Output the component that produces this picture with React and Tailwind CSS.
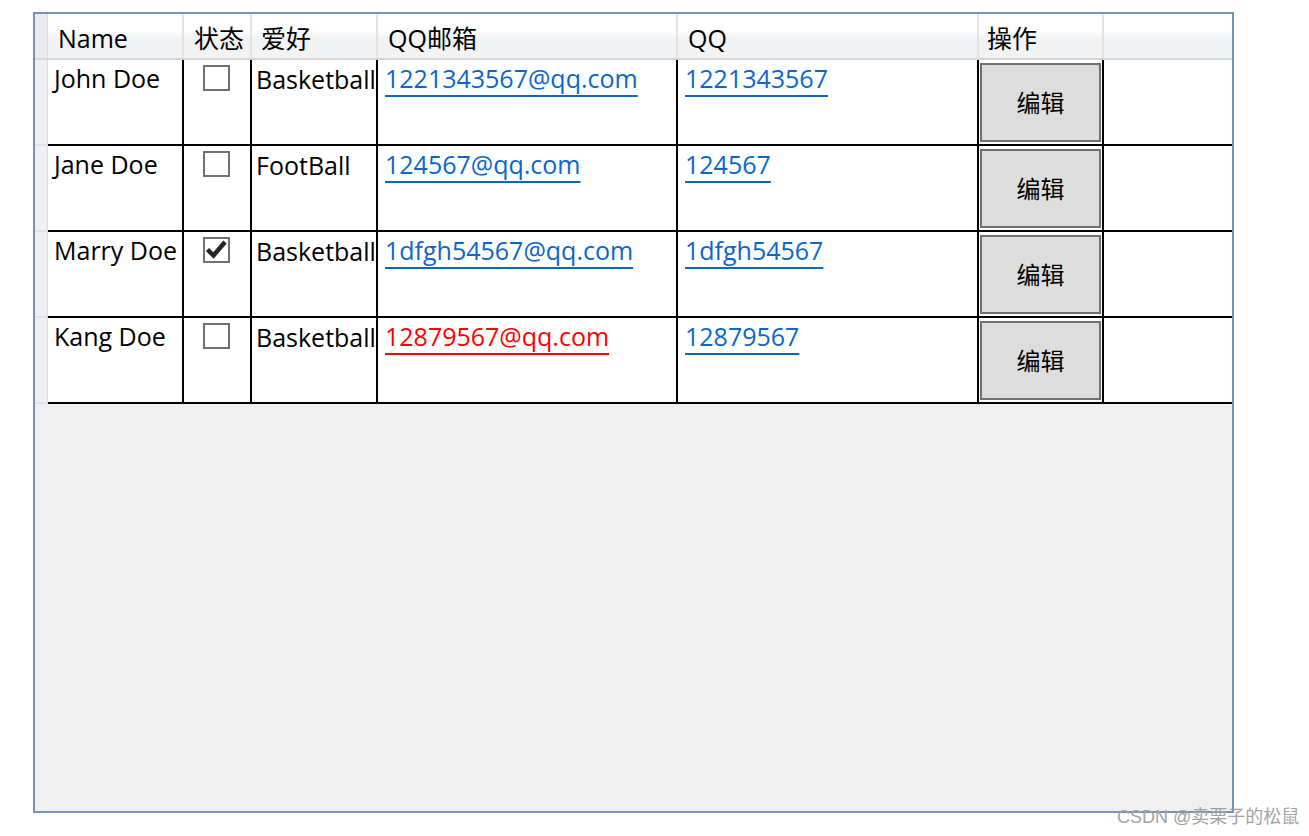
import React from "react";

const font = { fontFamily: '"Open Sans","Noto Sans CJK SC",sans-serif' };

const rows = [
  { name: "John Doe", checked: false, hobby: "Basketball", email: "1221343567@qq.com", qq: "1221343567", red: false },
  { name: "Jane Doe", checked: false, hobby: "FootBall", email: "124567@qq.com", qq: "124567", red: false },
  { name: "Marry Doe", checked: true, hobby: "Basketball", email: "1dfgh54567@qq.com", qq: "1dfgh54567", red: false },
  { name: "Kang Doe", checked: false, hobby: "Basketball", email: "12879567@qq.com", qq: "12879567", red: true },
];

function CheckBox({ checked }) {
  return (
    <div className="mx-auto mt-[5px] w-[27px] h-[26px] border-2 border-[#707070] bg-white flex items-center justify-center">
      {checked && (
        <svg width="23" height="22" viewBox="0 0 23 22">
          <path d="M2.5 10.5 L8.5 16.5 L20 3" fill="none" stroke="#262626" strokeWidth="4.5" strokeLinejoin="miter" strokeLinecap="butt" />
        </svg>
      )}
    </div>
  );
}

export default function App() {
  return (
    <div className="relative w-[1309px] h-[836px] bg-white pl-[33px] pt-[12px]" style={font}>
      <div className="w-[1201px] h-[801px] border-2 border-[#7393b8] bg-[#f0f0f0] flex flex-col">
        {/* header */}
        <div className="flex h-[46px] shrink-0 bg-[linear-gradient(#ffffff_0%,#ffffff_38%,#f2f3f5_55%,#f2f3f5_100%)] border-b-2 border-[#d6d6d6] text-[25px] leading-[44px] text-black">
          <div className="w-[13px] shrink-0 bg-[#ebebeb] border-r border-[#dadada]" />
          <div className="w-[136px] shrink-0 border-r-2 border-[#e4e4e4] pl-[10px] pt-[2px]">Name</div>
          <div className="w-[68px] shrink-0 border-r-2 border-[#e4e4e4] pl-[10px] pt-[2px]">状态</div>
          <div className="w-[126px] shrink-0 border-r-2 border-[#e4e4e4] pl-[9px] pt-[2px]">爱好</div>
          <div className="w-[300px] shrink-0 border-r-2 border-[#e4e4e4] pl-[10px] pt-[2px]">QQ邮箱</div>
          <div className="w-[301px] shrink-0 border-r-2 border-[#e4e4e4] pl-[10px] pt-[2px]">QQ</div>
          <div className="w-[125px] shrink-0 border-r-2 border-[#e4e4e4] pl-[8px] pt-[2px]">操作</div>
          <div className="flex-1" />
        </div>
        {/* rows */}
        {rows.map((r) => (
          <div key={r.name} className="flex h-[86px] shrink-0 text-[25px] leading-[32px] text-black">
            <div className="w-[13px] shrink-0 bg-[#f0f0f0] border-r border-[#d9d9d9] border-b-2 border-b-[#e2e2e2]" />
            <div className="flex flex-1 border-b-2 border-black bg-white">
              <div className="w-[136px] shrink-0 border-r-2 border-black pl-[6px] pt-[2px]">{r.name}</div>
              <div className="w-[68px] shrink-0 border-r-2 border-black pr-[2px]">
                <CheckBox checked={r.checked} />
              </div>
              <div className="w-[126px] shrink-0 border-r-2 border-black pl-[4px] pt-[3px] whitespace-nowrap">{r.hobby}</div>
              <div className="w-[300px] shrink-0 border-r-2 border-black pl-[7px] pt-[2px]">
                <span className={`underline underline-offset-[7px] decoration-[1.5px] ${r.red ? "text-[#ff0000]" : "text-[#0a66cc]"}`}>{r.email}</span>
              </div>
              <div className="w-[301px] shrink-0 border-r-2 border-black pl-[7px] pt-[2px]">
                <span className="underline underline-offset-[7px] decoration-[1.5px] text-[#0a66cc]">{r.qq}</span>
              </div>
              <div className="w-[125px] shrink-0 border-r-2 border-black pl-[1px] pt-[3px]">
                <div className="w-[121px] h-[79px] border-2 border-[#707070] bg-[#dddddd] flex items-center justify-center text-[24px] text-black">
                  编辑
                </div>
              </div>
              <div className="flex-1" />
            </div>
          </div>
        ))}
        <div className="flex-1" />
      </div>
      <div className="absolute left-[1117px] top-[805px] text-[18px] leading-[24px] text-[#a3a3a3]" style={{ fontFamily: '"Liberation Sans","Noto Sans CJK SC",sans-serif' }}>
        CSDN @卖栗子的松鼠
      </div>
    </div>
  );
}
